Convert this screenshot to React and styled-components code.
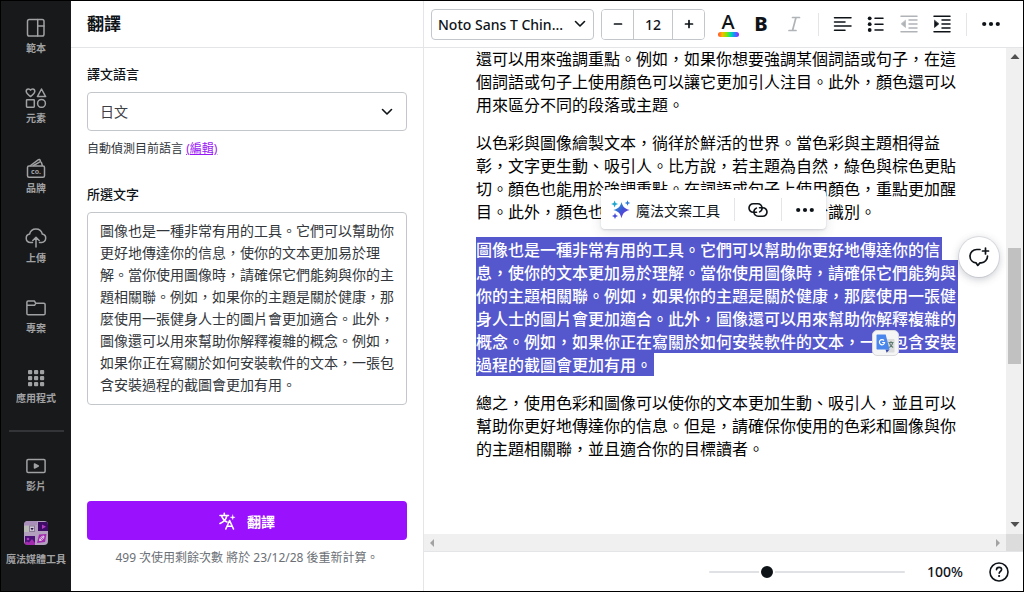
import React from "react";
import styled, { createGlobalStyle, css } from "styled-components";

const GlobalStyle = createGlobalStyle`
  *, *::before, *::after { box-sizing: border-box; }
  body {
    margin: 0;
    background: #fff;
    color: #0e1318;
    font-family: "Noto Sans", "Noto Sans CJK TC", sans-serif;
  }
  button, input, select, textarea { font: inherit; color: inherit; margin: 0; }
  svg { display: block; flex: none; }
`;

const Shell = styled.div`
  display: flex;
  height: 100vh;
  min-height: 520px;
  border: 1px solid #000;
  background: #fff;
  overflow: hidden;
`;

/* ---------- side rail ---------- */

const Rail = styled.nav`
  flex: 0 0 70px;
  display: flex;
  flex-direction: column;
  background: #18191b;
  overflow: hidden;
`;

const RailLink = styled.a`
  display: flex;
  flex-direction: column;
  align-items: center;
  gap: ${(p) => (p.$large ? 8 : 4)}px;
  flex: 0 0 70px;
  padding-top: ${(p) => (p.$large ? 12 : 17)}px;
  color: #a0a1a3;
  text-decoration: none;
  font-size: 10px;
  line-height: 12px;
  font-weight: 700;
  white-space: nowrap;
`;

const RailRule = styled.hr`
  width: 55px;
  height: 2px;
  margin: 9px auto 7px;
  border: 0;
  background: #333437;
  flex: none;
`;

/* ---------- translate panel ---------- */

const Panel = styled.section`
  flex: 0 0 353px;
  display: flex;
  flex-direction: column;
  border-right: 1px solid #e4e5e7;
`;

const PanelHeader = styled.header`
  flex: none;
  height: 47px;
  padding: 0 16px;
  display: flex;
  align-items: center;
  border-bottom: 1px solid #e4e5e7;
`;

const PanelTitle = styled.h1`
  margin: 0;
  font-size: 17px;
  line-height: 24px;
  font-weight: 700;
`;

const PanelBody = styled.form`
  flex: 1;
  display: flex;
  flex-direction: column;
  padding: 16px 16px 24px;
`;

const FieldLabel = styled.label`
  font-size: 13px;
  line-height: 20px;
  font-weight: 500;
  margin-bottom: 8px;
`;

const SelectWrap = styled.div`
  display: grid;
  align-items: center;
  width: ${(p) => p.$width || "auto"};
  & > * { grid-area: 1 / 1; }
  & > svg { justify-self: end; margin-right: ${(p) => p.$inset}px; pointer-events: none; }
`;

const Select = styled.select`
  appearance: none;
  width: 100%;
  height: ${(p) => p.$height}px;
  padding: 0 ${(p) => p.$pad}px;
  border: 1px solid #c3c7cc;
  border-radius: 4px;
  background: #fff;
  font-size: 14px;
  font-weight: ${(p) => p.$weight || 400};
  color: ${(p) => p.$color || "#0e1318"};
`;

const Hint = styled.p`
  margin: 9px 0 26px;
  font-size: 12px;
  line-height: 18px;
  color: #33373c;
  a { color: #9a17f5; }
`;

const TextBox = styled.textarea`
  height: 193px;
  padding: 7px 10px 7px 12px;
  border: 1px solid #c3c7cc;
  border-radius: 4px;
  resize: none;
  overflow: hidden;
  font-size: 14px;
  line-height: 22px;
  color: #33373c;
`;

const PrimaryButton = styled.button`
  display: flex;
  align-items: center;
  justify-content: center;
  gap: 10px;
  margin-top: auto;
  height: 39px;
  border: 0;
  border-radius: 4px;
  background: #9a12fd;
  color: #fff;
  font-size: 14px;
  font-weight: 700;
`;

const Quota = styled.p`
  margin: 9px 0 0;
  text-align: center;
  font-size: 12px;
  line-height: 18px;
  color: #6b7076;
`;

/* ---------- editor ---------- */

const Editor = styled.main`
  flex: 1;
  min-width: 0;
  display: flex;
  flex-direction: column;
`;

const Toolbar = styled.div`
  flex: none;
  height: 47px;
  display: flex;
  align-items: center;
  gap: 7px;
  padding: 0 7px;
  border-bottom: 1px solid #e4e5e7;
`;

const Stepper = styled.div`
  flex: none;
  display: flex;
  width: 104px;
  height: 31px;
  border: 1px solid #c3c7cc;
  border-radius: 4px;
  overflow: hidden;
`;

const StepButton = styled.button`
  width: 31px;
  display: grid;
  place-items: center;
  padding: 0;
  border: 0;
  background: #fff;
`;

const StepInput = styled.input`
  flex: 1;
  min-width: 0;
  padding: 0;
  border: 1px solid #c3c7cc;
  border-width: 0 1px;
  text-align: center;
  font-size: 14px;
  font-weight: 500;
`;

const Tools = styled.div`
  display: flex;
  align-items: center;
  gap: 1px;
`;

const ToolButton = styled.button`
  display: grid;
  place-items: center;
  width: 32px;
  height: 32px;
  padding: 0;
  border: 0;
  background: none;
  color: #0e1318;
  &:disabled { color: #b0b3b7; }
`;

const Glyph = styled.span`
  font-size: 20px;
  line-height: 24px;
  font-weight: 800;
`;

const ColorGlyph = styled.span`
  display: flex;
  flex-direction: column;
  align-items: center;
  font-size: 20px;
  line-height: 20px;
  font-weight: 500;
  &::after {
    content: "";
    width: 21px;
    height: 5px;
    border-radius: 3px;
    background: linear-gradient(90deg, #ff4b3a, #ffb700 20%, #7fe800 42%, #00e0a0 60%, #1a8cff 78%, #a020ff);
  }
`;

const Divider = styled.span`
  width: 1px;
  height: 23px;
  margin: 0 7px;
  background: #e4e5e7;
`;

const Workspace = styled.div`
  flex: 1;
  min-height: 0;
  display: grid;
  grid-template: minmax(0, 1fr) 17px / minmax(0, 1fr) 17px;
`;

const Canvas = styled.div`
  position: relative;
  overflow: hidden;
  padding-left: 52px;
`;

const Doc = styled.article`
  max-width: 484px;
  margin-top: -1px;
  font-size: 16px;
  line-height: 23px;
  font-family: "Noto Sans CJK TC", sans-serif;
  color: #000;
  p { margin: 0 0 15px; }
`;

const Selected = styled.mark`
  background: #5557cd;
  color: #fff;
  font-weight: 500;
  padding: 0 2px 0 0;
  box-decoration-break: clone;
  -webkit-box-decoration-break: clone;
`;

const FloatingBar = styled.div`
  position: absolute;
  top: 142px;
  left: 177px;
  display: flex;
  align-items: center;
  height: 39px;
  padding: 0 5px 0 10px;
  border-radius: 4px;
  background: #fff;
  box-shadow: 0 1px 2px rgba(60, 66, 87, 0.18), 0 3px 12px rgba(60, 66, 87, 0.14);
`;

const MagicButton = styled.button`
  display: flex;
  align-items: center;
  gap: 5px;
  padding: 0 7px 0 0;
  border: 0;
  background: none;
  font-size: 14px;
`;

const CommentButton = styled.button`
  position: absolute;
  top: 189px;
  right: 7px;
  width: 40px;
  height: 40px;
  display: grid;
  place-items: center;
  padding: 0;
  border: 0;
  border-radius: 50%;
  background: #fff;
  box-shadow: 0 0 0 1px rgba(60, 66, 87, 0.12), 0 2px 8px rgba(60, 66, 87, 0.3);
`;

const TranslateBubble = styled.button`
  position: absolute;
  top: 282px;
  left: 448px;
  width: 27px;
  height: 26px;
  display: grid;
  place-items: center;
  padding: 0;
  border: 1px solid #d9d9dc;
  border-radius: 5px;
  background: #f5f5f5;
`;

const scrollTrack = css`
  display: flex;
  align-items: center;
  background: #f0f0f0;
`;

const VTrack = styled.div`
  ${scrollTrack}
  flex-direction: column;
  padding: 4px 0;
`;

const HTrack = styled.div`
  ${scrollTrack}
  justify-content: space-between;
  padding: 0 3px;
`;

const Space = styled.span`
  flex: ${(p) => p.$grow} 1 0;
`;

const Thumb = styled.span`
  flex: 116 1 0;
  width: 13px;
  background: #c1c1c1;
`;

const Corner = styled.div`
  background: #dcdcdc;
`;

const StatusBar = styled.footer`
  flex: none;
  height: 40px;
  display: flex;
  align-items: center;
  justify-content: flex-end;
  border-top: 1px solid #e4e5e7;
  padding-right: 13px;
`;

const ZoomRange = styled.input`
  appearance: none;
  width: 196px;
  height: 18px;
  background: none;
  &::-webkit-slider-runnable-track {
    height: 2px;
    border-radius: 1px;
    background: #dfe1e5;
  }
  &::-webkit-slider-thumb {
    appearance: none;
    width: 16px;
    height: 16px;
    margin-top: -7px;
    border: 2px solid #fff;
    border-radius: 50%;
    background: #0e1318;
  }
`;

const ZoomValue = styled.output`
  width: 58px;
  margin-right: 25px;
  text-align: right;
  font-size: 14px;
  font-weight: 500;
`;

const HelpButton = styled.button`
  display: grid;
  place-items: center;
  padding: 0;
  border: 0;
  background: none;
`;

/* ---------- icons ---------- */

const Icon = ({ size = 20, width, height, sw = 1.5, children }) => (
  <svg
    width={width || size}
    height={height || size}
    viewBox={`0 0 ${width || size} ${height || size}`}
    fill="none"
    stroke="currentColor"
    strokeWidth={sw}
    strokeLinecap="round"
    strokeLinejoin="round"
    aria-hidden="true"
  >
    {children}
  </svg>
);

const TemplateIcon = () => (
  <Icon>
    <rect x="1.5" y="1.5" width="16.5" height="16.5" rx="1.8" />
    <path d="M11.7 1.5v16.5M11.7 8h6.3" />
  </Icon>
);

const ElementsIcon = () => (
  <Icon width={22} height={20}>
    <path d="M5.5 8.6C2.8 6.6 1.2 5.2 1.2 3.3 1.2 1.9 2.2.9 3.4.9 4.3.9 5.1 1.4 5.5 2.2 5.9 1.4 6.7.9 7.6.9 8.8.9 9.8 1.9 9.8 3.3 9.8 5.2 8.2 6.6 5.5 8.6Z" />
    <path d="M16.5 1 20.6 8.6H12.4Z" />
    <rect x="1.5" y="11.7" width="7.8" height="7.5" rx=".6" />
    <circle cx="16.5" cy="15.4" r="3.9" />
  </Icon>
);

const BrandIcon = () => (
  <Icon>
    <rect x="1.5" y="8" width="17" height="11.2" rx="1.5" />
    <path d="M4.500 7.500 12.500 1.700c.8-.5 1.400-.2 1.600.5l.2.8M7.500 7.500l6-3.400c1-.5 1.700-.3 2 .6l.8 2.800" />
    <text x="10" y="16" textAnchor="middle" fontSize="7" fontWeight="700" fill="currentColor" stroke="none">co.</text>
  </Icon>
);

const UploadIcon = () => (
  <Icon width={22} height={20}>
    <path d="M7.5 14.5H5.4A4.3 4.3 0 0 1 4.600 6 6.500 6.500 0 0 1 17.300 6a4.300 4.300 0 0 1-.7 8.500H14.500" />
    <path d="M11 19V9.500M7.800 12.500 11 9.300l3.200 3.200" />
  </Icon>
);

const FolderIcon = () => (
  <Icon>
    <path d="M.9 15.500V4.200C.9 3.500 1.400 3 2.100 3h6.300l1.400 2.300h8c.8 0 1.300.5 1.300 1.200v9c0 .8-.5 1.300-1.300 1.300H2.100c-.7 0-1.200-.5-1.200-1.300ZM1 7.300h7.500l1.300-2" />
  </Icon>
);

const AppsIcon = () => (
  <Icon>
    <g fill="currentColor" stroke="none">
      {[2, 8, 14].map((y) => [2, 8, 14].map((x) => <rect key={`${x}-${y}`} x={x} y={y} width="4.2" height="4.2" rx="1" />))}
    </g>
  </Icon>
);

const VideoIcon = () => (
  <Icon>
    <rect x=".9" y="3.5" width="18.2" height="13" rx="1.2" />
    <path d="m8.5 8 3.800 2-3.800 2Z" fill="currentColor" />
  </Icon>
);

const MagicMediaIcon = () => (
  <svg width="24" height="24" viewBox="0 0 24 24" aria-hidden="true">
    <defs>
      <clipPath id="tile"><rect width="24" height="24" rx="4" /></clipPath>
    </defs>
    <g clipPath="url(#tile)">
      <rect width="24" height="24" fill="#b3a0bf" />
      <rect width="13" height="4" fill="#a88fba" />
      <rect y="5" width="5" height="6" fill="#b9bcb4" />
      <rect x="5.5" y="5" width="5" height="5.5" fill="#cfc6d6" stroke="#8a7a98" />
      <path d="M6.500 7h3.200L8 9.500Z" fill="#2b1548" />
      <rect x="14" y="1" width="10" height="9" fill="#3d0c64" />
      <path d="m18 3.500 4 2.200-4 2.200Z" fill="#b23cc0" />
      <rect x="1" y="15" width="10" height="9" fill="#4a1278" />
      <circle cx="4" cy="18" r="1.3" fill="#b23cc0" />
      <path d="M0 24v-2l3-1.500 2 1 3-3.500 3 4v2Z" fill="#a32cae" />
      <path d="m15 13.500 7.500-.5-1.500 8-8 1Z" fill="#a32cae" />
      <path d="m15.500 19.500 4.500-4.500M15.500 19.500c2 .5 4.500-1.500 4.500-4.500-2.500 0-4.500 2-4.500 4.500Z" fill="none" stroke="#d8c4e0" strokeWidth="1" />
    </g>
  </svg>
);

const ChevronIcon = () => (
  <Icon width={12} height={8} sw={1.6}><path d="m1.500 1.500 4.500 4.500 4.500-4.500" /></Icon>
);

const TranslateIcon = () => (
  <Icon size={18} sw={1.6}>
    <path d="M1 3.500h8.500M5.300 1.200v2.300M2.500 3.500C3.500 7 5.500 9 8 10M8 3.500C7 7.500 4.500 10 1 11.500" />
    <path d="m6.800 17 3.800-8.500L14.500 17M8 14.300h5.300" />
    <path d="M13.700 2.800 14.300 4.700 16.200 5.300 14.300 5.900 13.700 7.800 13.100 5.900 11.200 5.300 13.100 4.700Z" fill="currentColor" strokeWidth=".3" />
  </Icon>
);

const MinusIcon = () => <Icon size={10} sw={1.7}><path d="M1.500 5h7" /></Icon>;
const PlusIcon = () => <Icon size={10} sw={1.7}><path d="M1.500 5h7M5 1.500v7" /></Icon>;

const ItalicIcon = () => (
  <Icon size={16} sw={1.7}><path d="M6.500 1.500h7M3 14.500h7M10 1.500 6.500 14.500" /></Icon>
);

const AlignIcon = () => (
  <Icon width={20} height={16}><path d="M1.500 1.700h16.500M1.500 5.900h10.500M1.500 10.100h16.500M1.500 14.300h10.500" /></Icon>
);

const ListIcon = () => (
  <Icon width={20} height={16}>
    <path d="M9 2.300h8M9 8.200h8M9 14h8" />
    <g fill="currentColor" stroke="none">
      <circle cx="3.7" cy="2.3" r="1.9" /><circle cx="3.7" cy="8.2" r="1.9" /><circle cx="3.7" cy="14" r="1.9" />
    </g>
  </Icon>
);

const IndentIcon = ({ out }) => (
  <Icon width={18} height={18}>
    <path d="M1 1.200h16M9 5.100h8M9 9h8M9 12.900h8M1 16.800h16" />
    <path d={out ? "M5.500 5.500v7L1.300 9Z" : "M1.500 5.500v7L5.700 9Z"} fill="currentColor" strokeWidth=".6" />
  </Icon>
);

const DotsIcon = () => (
  <Icon size={20}>
    <g fill="currentColor" stroke="none">
      <circle cx="3.2" cy="10" r="2.1" /><circle cx="10" cy="10" r="2.1" /><circle cx="16.8" cy="10" r="2.1" />
    </g>
  </Icon>
);

const SparkleIcon = () => (
  <svg width="20" height="20" viewBox="0 0 20 20" aria-hidden="true">
    <defs>
      <linearGradient id="spark" x1="0" y1="0" x2="1" y2="1">
        <stop offset="0.1" stopColor="#1fa6cf" />
        <stop offset="0.5" stopColor="#3f55d4" />
        <stop offset="0.9" stopColor="#7a34dc" />
      </linearGradient>
    </defs>
    <path d="M10.500 2C11.800 6.800 13.300 8.600 18.700 10 13.300 11.600 11.800 13.300 10.500 18.200 9.200 13.300 7.700 11.600 2.300 10 7.700 8.600 9.200 6.800 10.500 2Z" fill="url(#spark)" />
    <path d="M3.600.5 4.600 3 7.100 4 4.600 5 3.600 7.500 2.600 5 .1 4 2.600 3Z" fill="#1fa6cf" />
    <path d="M16.500.2 17.300 2.200 19.300 3 17.300 3.800 16.500 5.800 15.700 3.800 13.700 3 15.700 2.200Z" fill="#2678d8" />
    <path d="M4 13 4.900 15.100 7 16 4.900 16.900 4 19 3.100 16.900 1 16 3.100 15.100Z" fill="#4b4fd8" />
  </svg>
);

const LinkIcon = () => (
  <Icon width={20} height={16} sw={1.6}>
    <path d="M8.500 10.300H5.400A4.300 4.300 0 0 1 1 6 4.300 4.300 0 0 1 5.400 1.700h4.400A4.300 4.300 0 0 1 14.100 6c0 1.700-1 3.200-2.500 3.900" />
    <path d="M11.500 5.700h3.100A4.300 4.300 0 0 1 19 10a4.300 4.300 0 0 1-4.400 4.300h-4.400A4.300 4.300 0 0 1 5.900 10c0-1.700 1-3.200 2.500-3.900" />
  </Icon>
);

const CommentIcon = () => (
  <Icon size={22} sw={1.7}>
    <path d="M12 3.500H8.800C5.100 3.500 2 6.300 2 10.200c0 3.500 2.600 6.200 6 6.600l1.800 2.600 2.200-2.500h1.200c3.500-.2 6.300-3.200 6.300-6.700" />
    <path d="M17.500 2v6M14.500 5h6" />
  </Icon>
);

const GoogleTranslateIcon = () => (
  <svg width="19" height="19" viewBox="0 0 19 19" aria-hidden="true">
    <path d="M7 5h10.500c.6 0 1 .4 1 1v11.500c0 .6-.4 1-1 1H10.500Z" fill="#dcdcdc" />
    <path d="M12.500 8.500h5M15 7.200v1.300M13.500 8.500c.4 2.500 1.800 4.200 3.700 5M16.700 8.500c-.4 2.500-1.700 4.200-3.500 5" fill="none" stroke="#607d72" strokeWidth="1.1" />
    <path d="M9.500 15.500h4L10.700 18.700Z" fill="#3446a8" />
    <path d="M1.500.5h8.200l3.800 15H1.500c-.6 0-1-.4-1-1v-13c0-.6.4-1 1-1Z" fill="#4a86ec" />
    <path d="M8 6.500A2.600 2.600 0 1 0 8.600 8.500H6.200" fill="none" stroke="#fff" strokeWidth="1.2" />
  </svg>
);

const HelpIcon = () => (
  <Icon size={22} sw={1.6}>
    <circle cx="11" cy="11" r="9" />
    <path d="M8.500 8.800c0-1.500 1.100-2.400 2.600-2.400 1.400 0 2.500.9 2.500 2.200 0 1.900-2.400 1.900-2.400 3.700" />
    <circle cx="11.1" cy="15" r="1.1" fill="currentColor" stroke="none" />
  </Icon>
);

const arrows = {
  up: "M5 2 9.500 7H.5Z",
  down: "M5 7 .5 2h9Z",
  left: "M3 5 7 1v8Z",
  right: "M7 5 3 1v8Z",
};

const Arrow = ({ dir, color }) => (
  <svg width="10" height="10" viewBox="0 0 10 10" aria-hidden="true"><path d={arrows[dir]} fill={color} /></svg>
);

/* ---------- content ---------- */

const railItems = [
  ["範本", TemplateIcon],
  ["元素", ElementsIcon],
  ["品牌", BrandIcon],
  ["上傳", UploadIcon],
  ["專案", FolderIcon],
  ["應用程式", AppsIcon],
];

// Chinese prose uses the full-width comma.
const zh = (text) => text.replace(/,/g, "\uff0c");

const usage = zh("還可以用來強調重點。例如,如果你想要強調某個詞語或句子,在這個詞語或句子上使用顏色可以讓它更加引人注目。此外,顏色還可以用來區分不同的段落或主題。");
const drawing = zh("以色彩與圖像繪製文本,徜徉於鮮活的世界。當色彩與主題相得益彰,文字更生動、吸引人。比方說,若主題為自然,綠色與棕色更貼切。顏色也能用於強調重點。在詞語或句子上使用顏色,重點更加醒目。此外,顏色也可區分不同的段落或主題,便於識別。");
const selection = zh("圖像也是一種非常有用的工具。它們可以幫助你更好地傳達你的信息,使你的文本更加易於理解。當你使用圖像時,請確保它們能夠與你的主題相關聯。例如,如果你的主題是關於健康,那麼使用一張健身人士的圖片會更加適合。此外,圖像還可以用來幫助你解釋複雜的概念。例如,如果你正在寫關於如何安裝軟件的文本,一張包含安裝過程的截圖會更加有用。");
const summary = zh("總之,使用色彩和圖像可以使你的文本更加生動、吸引人,並且可以幫助你更好地傳達你的信息。但是,請確保你使用的色彩和圖像與你的主題相關聯,並且適合你的目標讀者。");

export default function App() {
  return (
    <Shell lang="zh-Hant">
      <GlobalStyle />
      <Rail>
        {railItems.map(([name, ItemIcon]) => (
          <RailLink href="#" key={name}><ItemIcon />{name}</RailLink>
        ))}
        <RailRule />
        <RailLink href="#"><VideoIcon />影片</RailLink>
        <RailLink href="#" $large><MagicMediaIcon />魔法媒體工具</RailLink>
      </Rail>

      <Panel>
        <PanelHeader><PanelTitle>翻譯</PanelTitle></PanelHeader>
        <PanelBody onSubmit={(e) => e.preventDefault()}>
          <FieldLabel htmlFor="lang">譯文語言</FieldLabel>
          <SelectWrap $inset={14}>
            <Select id="lang" $height={39} $pad={12} $color="#3c4045"><option>日文</option></Select>
            <ChevronIcon />
          </SelectWrap>
          <Hint>自動偵測目前語言 <a href="#">(編輯)</a></Hint>
          <FieldLabel htmlFor="source">所選文字</FieldLabel>
          <TextBox id="source" defaultValue={selection} spellCheck={false} />
          <PrimaryButton type="submit"><TranslateIcon />翻譯</PrimaryButton>
          <Quota>499 次使用剩餘次數 將於 23/12/28 後重新計算。</Quota>
        </PanelBody>
      </Panel>

      <Editor>
        <Toolbar>
          <SelectWrap $width="163px" $inset={8}>
            <Select aria-label="字型" $height={31} $pad={6} $weight={500}><option>Noto Sans T Chin...</option></Select>
            <ChevronIcon />
          </SelectWrap>
          <Stepper>
            <StepButton aria-label="縮小"><MinusIcon /></StepButton>
            <StepInput aria-label="字級" defaultValue="12" />
            <StepButton aria-label="放大"><PlusIcon /></StepButton>
          </Stepper>
          <Tools>
            <ToolButton aria-label="文字顏色"><ColorGlyph>A</ColorGlyph></ToolButton>
            <ToolButton aria-label="粗體"><Glyph>B</Glyph></ToolButton>
            <ToolButton aria-label="斜體" disabled><ItalicIcon /></ToolButton>
            <Divider />
            <ToolButton aria-label="對齊"><AlignIcon /></ToolButton>
            <ToolButton aria-label="清單"><ListIcon /></ToolButton>
            <ToolButton aria-label="減少縮排" disabled><IndentIcon out /></ToolButton>
            <ToolButton aria-label="增加縮排"><IndentIcon /></ToolButton>
            <Divider />
            <ToolButton aria-label="更多"><DotsIcon /></ToolButton>
          </Tools>
        </Toolbar>

        <Workspace>
          <Canvas>
            <Doc>
              <p>{usage}</p>
              <p>{drawing}</p>
              <p><Selected>{selection}</Selected></p>
              <p>{summary}</p>
            </Doc>
            <FloatingBar>
              <MagicButton><SparkleIcon />魔法文案工具</MagicButton>
              <Divider />
              <ToolButton aria-label="連結"><LinkIcon /></ToolButton>
              <Divider />
              <ToolButton aria-label="更多"><DotsIcon /></ToolButton>
            </FloatingBar>
            <TranslateBubble aria-label="翻譯選取文字"><GoogleTranslateIcon /></TranslateBubble>
            <CommentButton aria-label="新增評論"><CommentIcon /></CommentButton>
          </Canvas>
          <VTrack>
            <Arrow dir="up" color="#505050" />
            <Space $grow={186} />
            <Thumb />
            <Space $grow={156} />
            <Arrow dir="down" color="#505050" />
          </VTrack>
          <HTrack>
            <Arrow dir="left" color="#a3a3a3" />
            <Arrow dir="right" color="#a3a3a3" />
          </HTrack>
          <Corner />
        </Workspace>

        <StatusBar>
          <ZoomRange type="range" aria-label="縮放" min="0" max="100" defaultValue="28" />
          <ZoomValue>100%</ZoomValue>
          <HelpButton aria-label="說明"><HelpIcon /></HelpButton>
        </StatusBar>
      </Editor>
    </Shell>
  );
}
